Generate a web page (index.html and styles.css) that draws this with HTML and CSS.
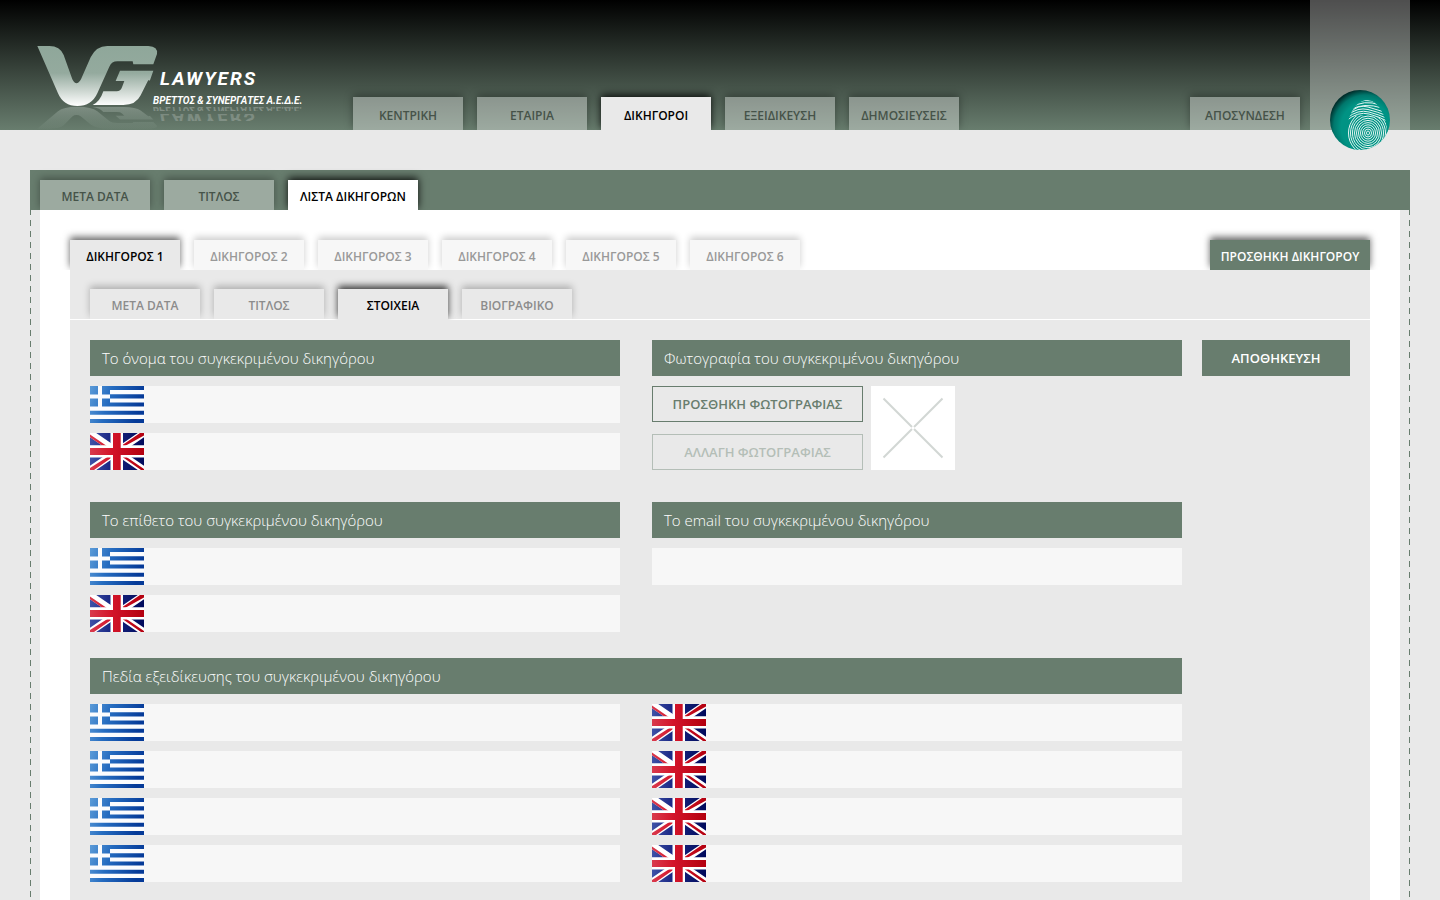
FILE: index.html
```html
<!DOCTYPE html>
<html lang="el">
<head>
<meta charset="utf-8">
<title>VG Lawyers</title>
<link rel="stylesheet" href="styles.css">
</head>
<body>
<svg class="defs" aria-hidden="true">
  <defs>
    <linearGradient id="gr-blue" x1="0" y1="0" x2="1" y2="0.2">
      <stop offset="0" stop-color="#5b9bd8"/><stop offset="0.4" stop-color="#256cc0"/><stop offset="1" stop-color="#053a98"/>
    </linearGradient>
    <linearGradient id="uk-blue" x1="0" y1="0" x2="1" y2="0">
      <stop offset="0" stop-color="#3f52a8"/><stop offset="0.35" stop-color="#1c2a86"/><stop offset="1" stop-color="#000a5c"/>
    </linearGradient>
    <linearGradient id="uk-red" gradientUnits="userSpaceOnUse" x1="0" y1="0" x2="54" y2="0">
      <stop offset="0" stop-color="#d93a4d"/><stop offset="0.4" stop-color="#d3142a"/><stop offset="1" stop-color="#b3000f"/>
    </linearGradient>
    <symbol id="flag-gr" viewBox="0 0 54 37">
      <rect width="54" height="37" fill="url(#gr-blue)"/>
      <path fill="#fbfcfe" d="M20 4h34v4.200H20zM20 12.400h34v4.100H20zM0 20.600h54v4.100H0zM0 28.800h54v4.100H0zM8 0h4v20.600H8zM0 8.500h20v4H0z"/>
    </symbol>
    <symbol id="flag-uk" viewBox="0 0 54 37">
      <rect width="54" height="37" fill="url(#uk-blue)"/>
      <path stroke="#fff" stroke-width="7" d="M0 0L54 37M54 0L0 37"/>
      <path fill="url(#uk-red)" d="M0 1.500L19 14.500H15L0 4.200zM54 0H50L31 13H35L54 2.500zM0 37H4L24 23H19L0 35zM54 36L35 23H31L51 37H54z"/>
      <path fill="#fff" d="M20.500 0h12.500v37H20.500zM0 12.200h54v12.300H0z"/>
      <path fill="url(#uk-red)" d="M23 0h7.700v37H23zM0 15h54v7H0z"/>
    </symbol>
  </defs>
</svg>

<header class="header">
  <a class="logo" href="#" aria-label="VG Lawyers">
    <svg width="300" height="100" viewBox="0 0 300 100">
      <defs>
        <linearGradient id="silver" gradientUnits="userSpaceOnUse" x1="0" y1="48" x2="0" y2="228">
          <stop offset="0" stop-color="#8fa79a"/><stop offset="0.45" stop-color="#94aa9e"/><stop offset="0.75" stop-color="#cdd7d1"/><stop offset="1" stop-color="#fff"/>
        </linearGradient>
        <linearGradient id="fade" gradientUnits="userSpaceOnUse" x1="0" y1="228" x2="0" y2="48">
          <stop offset="0" stop-color="#c9d6ce" stop-opacity="0.35"/><stop offset="1" stop-color="#a9bbb0" stop-opacity="0.05"/>
        </linearGradient>
        <path id="vg" d="M52 48H88Q120 48 131 75L157 148Q169 172 183 148L212 82Q228 48 262 48H385Q415 50 411 72L400 103H340L338 94H292Q275 94 268 110L232 190Q215 228 172 228Q130 228 114 190ZM300 122H400L390 151Q388 153 385 150L362 196Q348 225 310 225H218Q240 215 250 184H290Q302 184 306 172L313 153H287Z"/>
        <clipPath id="clip-a"><rect x="0" y="77" width="300" height="4"/></clipPath>
        <clipPath id="clip-b"><rect x="0" y="84" width="300" height="7"/></clipPath>
      </defs>
      <use href="#vg" fill="url(#silver)" transform="scale(0.3333)"/>
      <use href="#vg" fill="url(#fade)" transform="translate(0 104.500) scale(0.3333 -0.1220)"/>
      <text id="logo-name" class="logo-name" x="140" y="55">LAWYERS</text>
      <text id="logo-sub" class="logo-sub" x="133" y="74">ΒΡΕΤΤΟΣ &amp; ΣΥΝΕΡΓΑΤΕΣ Α.Ε.Δ.Ε.</text>
      <g clip-path="url(#clip-a)" opacity="0.25" aria-hidden="true"><use href="#logo-sub" transform="translate(0 151) scale(1 -1)"/></g>
      <g clip-path="url(#clip-b)" opacity="0.2" aria-hidden="true"><use href="#logo-name" transform="translate(0 138) scale(1 -1)"/></g>
    </svg>
  </a>
  <nav class="tabs main-nav">
    <a class="tab" href="#">ΚΕΝΤΡΙΚΗ</a>
    <a class="tab" href="#">ΕΤΑΙΡΙΑ</a>
    <a class="tab active" href="#">ΔΙΚΗΓΟΡΟΙ</a>
    <a class="tab" href="#">ΕΞΕΙΔΙΚΕΥΣΗ</a>
    <a class="tab" href="#">ΔΗΜΟΣΙΕΥΣΕΙΣ</a>
    <a class="tab logout" href="#">ΑΠΟΣΥΝΔΕΣΗ</a>
  </nav>
  <div class="profile">
    <a class="badge" href="#" aria-label="Προφίλ">
      <svg width="60" height="60" viewBox="0 0 60 60">
        <defs>
          <radialGradient id="teal" cx="0.6" cy="0.62" r="0.64">
            <stop offset="0.65" stop-color="#009384"/><stop offset="0.84" stop-color="#00776c"/><stop offset="1" stop-color="#002e2b"/>
          </radialGradient>
          <clipPath id="disc"><circle cx="30" cy="30" r="30"/></clipPath>
          <clipPath id="print"><path d="M20 60Q15 44 18 32Q24 10 38 10Q46 11 51 20Q57 30 57 43L54 60Z"/></clipPath>
          <clipPath id="whorl"><path d="M0 60V34Q20 24 38 25Q50 26 60 34V60Z"/></clipPath>
        </defs>
        <circle cx="30" cy="30" r="30" fill="url(#teal)"/>
        <g clip-path="url(#disc)"><g clip-path="url(#print)" fill="none" stroke="#e4f6f3">
          <path d="M22 15Q34 7 48 13M20 18Q34 9 50 15M20 20Q34 12 52 18M20 23Q28 14 38 17T54 22M18 25Q28 17 38 19.500T55 25M17 28Q28 19 39 22T56 28M16 31Q28 21 39 24T57 31"/>
          <g clip-path="url(#whorl)">
            <ellipse cx="38" cy="43" rx="1.500" ry="2"/><ellipse cx="38" cy="43" rx="3.500" ry="4"/>
            <ellipse cx="38" cy="43" rx="5.500" ry="6"/><ellipse cx="38" cy="43" rx="7.500" ry="8.200"/>
            <ellipse cx="38" cy="43" rx="9.500" ry="10.400"/><ellipse cx="38" cy="43" rx="11.500" ry="12.600"/>
            <ellipse cx="38" cy="43" rx="13.500" ry="14.800"/><ellipse cx="38" cy="43" rx="15.500" ry="17"/>
            <ellipse cx="38" cy="43" rx="17.500" ry="19.200"/><ellipse cx="38" cy="43" rx="19.500" ry="21.400"/>
          </g>
        </g></g>
      </svg>
    </a>
  </div>
</header>

<main class="frame">
  <nav class="tabs section-nav">
    <a class="tab" href="#">META DATA</a>
    <a class="tab" href="#">ΤΙΤΛΟΣ</a>
    <a class="tab active wide" href="#">ΛΙΣΤΑ ΔΙΚΗΓΟΡΩΝ</a>
  </nav>
  <div class="sheet">
    <nav class="tabs lawyer-nav">
      <a class="tab active" href="#">ΔΙΚΗΓΟΡΟΣ 1</a>
      <a class="tab" href="#">ΔΙΚΗΓΟΡΟΣ 2</a>
      <a class="tab" href="#">ΔΙΚΗΓΟΡΟΣ 3</a>
      <a class="tab" href="#">ΔΙΚΗΓΟΡΟΣ 4</a>
      <a class="tab" href="#">ΔΙΚΗΓΟΡΟΣ 5</a>
      <a class="tab" href="#">ΔΙΚΗΓΟΡΟΣ 6</a>
      <button class="tab add" type="button">ΠΡΟΣΘΗΚΗ ΔΙΚΗΓΟΡΟΥ</button>
    </nav>
    <div class="panel">
      <nav class="tabs detail-nav">
        <a class="tab" href="#">META DATA</a>
        <a class="tab" href="#">ΤΙΤΛΟΣ</a>
        <a class="tab active" href="#">ΣΤΟΙΧΕΙΑ</a>
        <a class="tab" href="#">ΒΙΟΓΡΑΦΙΚΟ</a>
      </nav>
      <form class="form">
        <div class="fields">
          <section class="group">
            <h2 class="title">Το όνομα του συγκεκριμένου δικηγόρου</h2>
            <label class="field"><svg class="flag" role="img" aria-label="Ελληνικά"><use href="#flag-gr"/></svg><input class="input" type="text"></label>
            <label class="field"><svg class="flag" role="img" aria-label="English"><use href="#flag-uk"/></svg><input class="input" type="text"></label>
          </section>
          <section class="group">
            <h2 class="title">Φωτογραφία του συγκεκριμένου δικηγόρου</h2>
            <div class="photo">
              <div class="photo-actions">
                <button class="outline" type="button">ΠΡΟΣΘΗΚΗ ΦΩΤΟΓΡΑΦΙΑΣ</button>
                <button class="outline" type="button" disabled>ΑΛΛΑΓΗ ΦΩΤΟΓΡΑΦΙΑΣ</button>
              </div>
              <svg class="preview" width="84" height="84" viewBox="0 0 84 84" aria-hidden="true"><path d="M12.500 12.500L41 41M71.500 12.500L43 41M12.500 71.500L41 43M71.500 71.500L43 43" stroke="#d2d7d4" stroke-width="2"/></svg>
            </div>
          </section>
          <section class="group">
            <h2 class="title">Το επίθετο του συγκεκριμένου δικηγόρου</h2>
            <label class="field"><svg class="flag" role="img" aria-label="Ελληνικά"><use href="#flag-gr"/></svg><input class="input" type="text"></label>
            <label class="field"><svg class="flag" role="img" aria-label="English"><use href="#flag-uk"/></svg><input class="input" type="text"></label>
          </section>
          <section class="group">
            <h2 class="title"><label for="email">Το email του συγκεκριμένου δικηγόρου</label></h2>
            <div class="field"><input class="input" id="email" type="email"></div>
          </section>
          <section class="group full">
            <h2 class="title">Πεδία εξειδίκευσης του συγκεκριμένου δικηγόρου</h2>
            <div class="pairs">
              <label class="field"><svg class="flag" role="img" aria-label="Ελληνικά 1"><use href="#flag-gr"/></svg><input class="input" type="text"></label>
              <label class="field"><svg class="flag" role="img" aria-label="English 1"><use href="#flag-uk"/></svg><input class="input" type="text"></label>
              <label class="field"><svg class="flag" role="img" aria-label="Ελληνικά 2"><use href="#flag-gr"/></svg><input class="input" type="text"></label>
              <label class="field"><svg class="flag" role="img" aria-label="English 2"><use href="#flag-uk"/></svg><input class="input" type="text"></label>
              <label class="field"><svg class="flag" role="img" aria-label="Ελληνικά 3"><use href="#flag-gr"/></svg><input class="input" type="text"></label>
              <label class="field"><svg class="flag" role="img" aria-label="English 3"><use href="#flag-uk"/></svg><input class="input" type="text"></label>
              <label class="field"><svg class="flag" role="img" aria-label="Ελληνικά 4"><use href="#flag-gr"/></svg><input class="input" type="text"></label>
              <label class="field"><svg class="flag" role="img" aria-label="English 4"><use href="#flag-uk"/></svg><input class="input" type="text"></label>
            </div>
          </section>
        </div>
        <button class="save" type="submit">ΑΠΟΘΗΚΕΥΣΗ</button>
      </form>
    </div>
  </div>
</main>
</body>
</html>
```
FILE: styles.css
```css
* { box-sizing: border-box; }

body {
  margin: 0;
  min-height: 100vh;
  display: flex;
  flex-direction: column;
  background: #e9e9e9;
  font-family: "Open Sans", "Noto Sans", sans-serif;
  font-size: 12px;
  color: #000;
}

button, input { font: inherit; border: 0; border-radius: 0; margin: 0; }
button { cursor: pointer; }
.defs { position: absolute; width: 0; height: 0; }

/* Header */
.header {
  display: flex;
  align-items: flex-end;
  height: 130px;
  padding: 0 30px 0 20px;
  background: linear-gradient(#000, #687d6e);
}
.logo { width: 333px; height: 100px; flex: none; }
.logo svg { display: block; }
.logo-name { font: italic bold 19px Roboto, sans-serif; letter-spacing: 2px; fill: #fff; }
.logo-sub { font: italic bold 10px Roboto, sans-serif; fill: #fff; }
.profile {
  align-self: stretch;
  position: relative;
  width: 100px;
  margin-left: 10px;
  background: rgba(255, 255, 255, 0.31);
}
.badge { position: absolute; left: 20px; bottom: -20px; width: 60px; height: 60px; }
.badge svg { display: block; }

/* Tabs */
.tabs { display: flex; gap: 14px; }
.tab {
  display: flex;
  align-items: center;
  justify-content: center;
  width: 110px;
  height: 30px;
  padding: 3px 0 0;
  font-weight: 570;
  line-height: 16px;
  white-space: nowrap;
  text-decoration: none;
  color: #465349;
  background: rgba(255, 255, 255, 0.35);
  box-shadow: 0 -2px 8px rgba(0, 0, 0, 0.35);
  clip-path: inset(-12px -12px 0 -12px);
}
.tab.active { color: #000; box-shadow: 0 -2px 8px rgba(0, 0, 0, 0.9); }
.main-nav { flex: 1; }
.main-nav .tab { height: 33px; padding-top: 4px; }
.main-nav .active { background: #e9e9e9; }
.logout { margin-left: auto; }

/* Framed work area */
.frame {
  flex: 1;
  display: flex;
  flex-direction: column;
  margin: 40px 30px 0;
}
.section-nav { padding: 10px 10px 0; background: #687d6e; }
.section-nav .active { background: #fff; }
.section-nav .wide { width: 130px; }
.sheet {
  flex: 1;
  display: flex;
  flex-direction: column;
  padding: 30px 40px 0;
  background:
    linear-gradient(#687d6e 6px, transparent 6px) 0 -1px / 1px 11px repeat-y,
    linear-gradient(#687d6e 6px, transparent 6px) 100% -1px / 1px 11px repeat-y,
    linear-gradient(90deg, #e9e9e9 10px, #fff 10px, #fff calc(100% - 10px), #e9e9e9 calc(100% - 10px));
}
.lawyer-nav .tab { color: #999; background: #f7f7f7; box-shadow: 0 -3px 7px rgba(0, 0, 0, 0.2); }
.lawyer-nav .active { color: #000; background: #e9e9e9; box-shadow: 0 -3px 7px rgba(0, 0, 0, 0.6); }
.lawyer-nav .add {
  width: 160px;
  margin-left: auto;
  color: #fff;
  background: #687d6e;
  box-shadow: 0 -3px 7px rgba(0, 0, 0, 0.6);
}
.panel { flex: 1; background: #e9e9e9; }
.detail-nav {
  height: 50px;
  padding: 19px 20px 0;
  border-bottom: 1px solid #fff;
}
.detail-nav .tab { color: #8c8c8c; background: #e9e9e9; box-shadow: 0 -3px 7px rgba(0, 0, 0, 0.25); }
.detail-nav .active { height: 31px; padding-bottom: 1px; color: #000; box-shadow: 0 -3px 7px rgba(0, 0, 0, 0.75); }

/* Form */
.form { display: flex; align-items: flex-start; gap: 20px; padding: 20px 20px 18px; }
.fields { flex: 1; display: grid; grid-template-columns: 1fr 1fr; column-gap: 32px; }
.group { display: flex; flex-direction: column; gap: 10px; padding-bottom: 32px; }
.group:nth-child(3), .group:nth-child(4) { padding-bottom: 26px; }
.full { grid-column: 1 / -1; padding-bottom: 0; }
.title {
  margin: 0;
  padding: 0 12px;
  font-size: 15px;
  font-weight: 330;
  line-height: 36px;
  color: #fff;
  background: #687d6e;
}
.pairs { display: grid; grid-template-columns: 1fr 1fr; gap: 10px 32px; }
.field { display: flex; height: 37px; background: #f7f7f7; }
.flag { flex: none; width: 54px; height: 37px; }
.input { flex: 1; min-width: 0; padding: 0 12px; font-size: 15px; background: transparent; }
.photo { display: flex; gap: 8px; }
.photo-actions { display: flex; flex-direction: column; gap: 12px; width: 211px; }
.outline {
  height: 36px;
  padding: 0;
  font-size: 13px;
  font-weight: 570;
  color: #687d6e;
  background: transparent;
  border: 1px solid #687d6e;
}
.outline:disabled { color: #b4beb7; border-color: #b4beb7; cursor: default; }
.preview { background: #fff; }
.save {
  width: 148px;
  height: 36px;
  padding: 0;
  font-size: 13px;
  font-weight: 570;
  color: #fff;
  background: #687d6e;
}
```
